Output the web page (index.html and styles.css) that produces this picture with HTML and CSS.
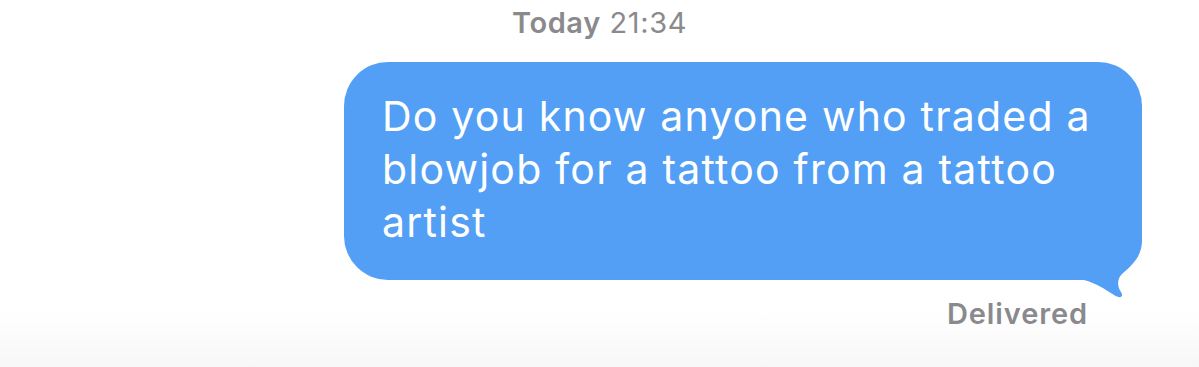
FILE: index.html
```html
<!DOCTYPE html>
<html lang="en">
<head>
<meta charset="utf-8">
<title>Messages</title>
<link rel="stylesheet" href="styles.css">
</head>
<body>
<main class="thread">
  <div class="stamp"><span class="stamp-day">Today</span> 21:34</div>
  <div class="row">
    <div class="bubble">
      <p class="bubble-text">Do you know anyone who traded a<br>blowjob for a tattoo from a tattoo<br>artist</p>
      <svg class="tail" width="80" height="70" viewBox="1070 230 80 70" aria-hidden="true">
        <path d="M1070,280 L1084,280 C1096,283 1106,290 1114,295 C1120,299 1124,297 1121,292 C1117,286 1117,279 1122,274 C1132,265 1142,257 1142,240 L1142,230 L1070,230 Z"/>
      </svg>
    </div>
  </div>
  <div class="status">Delivered</div>
</main>
</body>
</html>
```

FILE: styles.css
```css
html, body {
  margin: 0;
  padding: 0;
}
body {
  width: 1199px;
  height: 367px;
  overflow: hidden;
  font-family: Inter, "Noto Sans", sans-serif;
  background: linear-gradient(to bottom, #ffffff 0px, #ffffff 310px, #f7f7f7 367px);
}
.thread {
  display: flex;
  flex-direction: column;
}
.stamp {
  text-align: center;
  color: #8a8a8e;
  font-size: 29px;
  line-height: 34px;
  padding-top: 6px;
  letter-spacing: 0.6px;
}
.stamp-day {
  font-weight: 600;
}
.row {
  display: flex;
  justify-content: flex-end;
  padding-right: 57px;
  margin-top: 22px;
}
.bubble {
  position: relative;
  width: 798px;
  height: 218px;
  box-sizing: border-box;
  background: #529ff5;
  border-radius: 44px;
  padding: 28px 20px 0 38px;
}
.bubble-text {
  margin: 0;
  color: #ffffff;
  font-size: 41px;
  line-height: 53px;
  letter-spacing: 1.2px;
}
.tail {
  position: absolute;
  right: -8px;
  bottom: -20px;
  fill: #529ff5;
}
.status {
  align-self: flex-end;
  margin-right: 111px;
  margin-top: 18px;
  color: #8a8a8e;
  font-size: 29px;
  font-weight: 600;
  line-height: 32px;
  letter-spacing: 0.9px;
}
```
